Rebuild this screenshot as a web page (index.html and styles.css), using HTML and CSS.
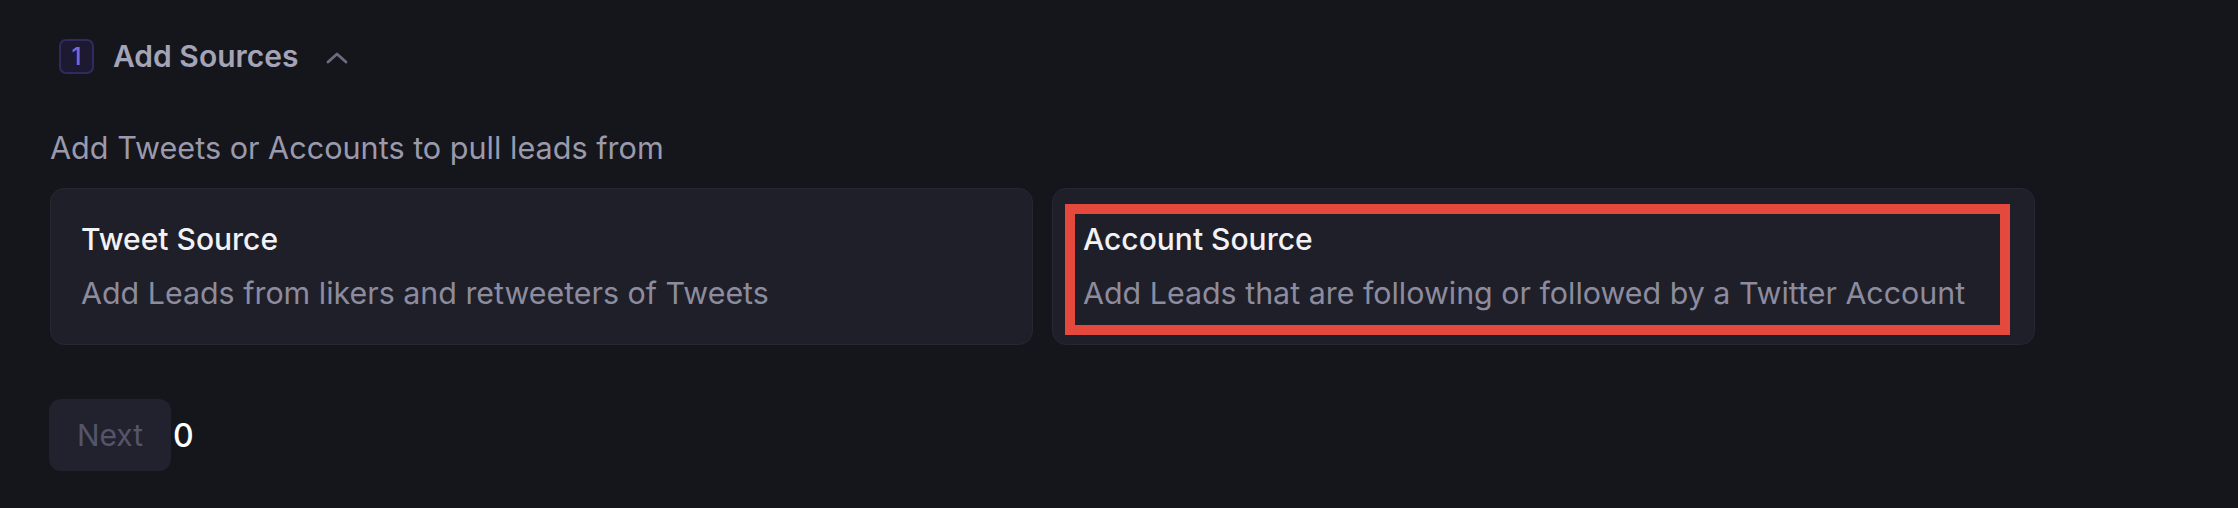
FILE: index.html
```html
<!DOCTYPE html>
<html lang="en">
<head>
<meta charset="utf-8">
<title>Add Sources</title>
<link rel="stylesheet" href="styles.css">
</head>
<body>
<main class="page">
  <div class="step-header">
    <span class="step-badge">1</span>
    <span class="step-title">Add Sources</span>
    <svg class="chevron" width="22" height="12" viewBox="0 0 22 12" aria-hidden="true">
      <path d="M2 10 L11 2 L20 10" fill="none" stroke="currentColor" stroke-width="2.8" stroke-linecap="round" stroke-linejoin="round"/>
    </svg>
  </div>

  <p class="subtitle">Add Tweets or Accounts to pull leads from</p>

  <div class="sources">
    <div class="source-card">
      <div class="source-title">Tweet Source</div>
      <div class="source-desc">Add Leads from likers and retweeters of Tweets</div>
    </div>
    <div class="source-card">
      <div class="source-title">Account Source</div>
      <div class="source-desc">Add Leads that are following or followed by a Twitter Account</div>
      <div class="highlight"></div>
    </div>
  </div>

  <div class="actions">
    <button class="next-btn" disabled>Next</button><span class="count">0</span>
  </div>
</main>
</body>
</html>
```

FILE: styles.css
```css
* {
  box-sizing: border-box;
}

html, body {
  margin: 0;
  padding: 0;
  background: #15151c;
  height: 100%;
}

body {
  font-family: "Inter", "Noto Sans", sans-serif;
  color: #ffffff;
}

.page {
  padding: 39px 0 0 50px;
}

.step-header {
  display: flex;
  align-items: center;
  height: 35px;
  padding-left: 9px;
}

.step-badge {
  width: 35px;
  height: 35px;
  border-radius: 7px;
  border: 2px solid #32295e;
  background: #1c1931;
  color: #7b68d6;
  font-size: 24px;
  font-weight: 500;
  display: flex;
  align-items: center;
  justify-content: center;
  line-height: 1;
}

.step-title {
  margin-left: 19px;
  font-size: 30px;
  font-weight: 600;
  color: #a4a4b6;
  line-height: 35px;
}

.chevron {
  margin-left: 28px;
  margin-top: 2px;
  color: #6c6c7e;
}

.subtitle {
  margin: 54px 0 0;
  font-size: 30.6px;
  line-height: 40px;
  color: #9a9aac;
  font-weight: 400;
}

.sources {
  margin-top: 20px;
  display: grid;
  grid-template-columns: 983px 983px;
  column-gap: 19px;
}

.source-card {
  position: relative;
  background: #1f1f29;
  border: 1px solid #272733;
  border-radius: 14px;
  padding: 32px 30px 33px;
}

.source-title {
  font-size: 30px;
  line-height: 36px;
  font-weight: 500;
  color: #f2f2f5;
}

.source-desc {
  margin-top: 18px;
  font-size: 30.4px;
  line-height: 36px;
  color: #8c8c9e;
}

.highlight {
  position: absolute;
  left: 12px;
  top: 15px;
  width: 945px;
  height: 131px;
  border: 10px solid #e5493d;
  pointer-events: none;
}

.actions {
  margin-top: 54px;
  display: flex;
  align-items: center;
}

.next-btn {
  width: 122px;
  height: 72px;
  margin-left: -1px;
  border: none;
  border-radius: 12px;
  background: #22222e;
  color: #54546a;
  font-family: "Inter", "Noto Sans", sans-serif;
  font-size: 30px;
  font-weight: 400;
  padding: 0;
}

.count {
  margin-left: 2px;
  font-size: 32px;
  font-weight: 500;
  color: #ffffff;
}
```
